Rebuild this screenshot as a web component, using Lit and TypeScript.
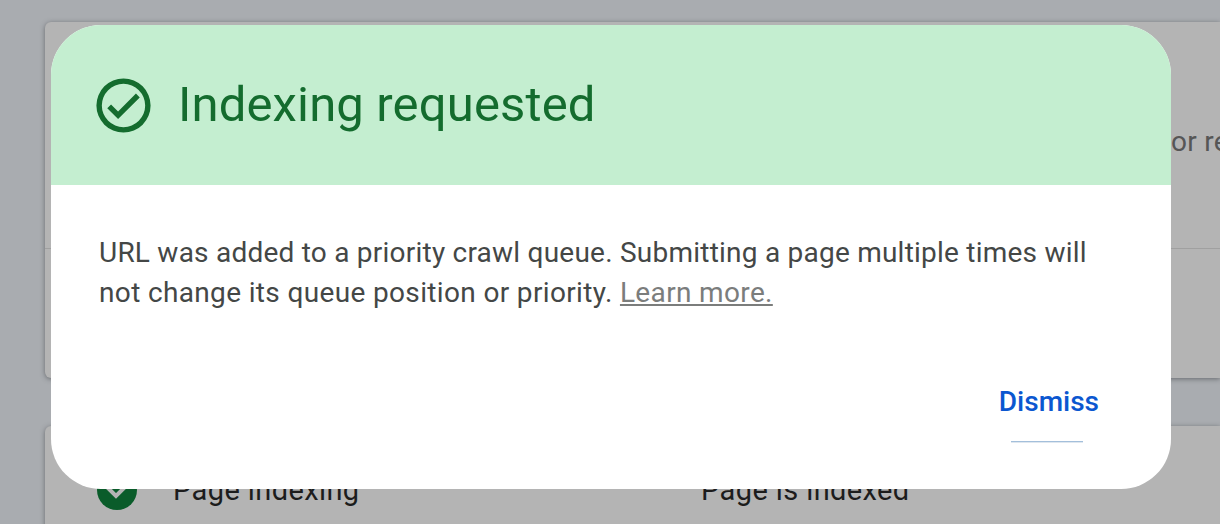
import { LitElement, html, css } from "lit";
import { customElement } from "lit/decorators.js";

@customElement("app-root")
export class AppRoot extends LitElement {
  static styles = css`
    :host {
      display: block;
      position: relative;
      width: 1220px;
      height: 524px;
      overflow: hidden;
      background: #a9acb0;
      font-family: Roboto, "Noto Sans", sans-serif;
    }
    .page {
      display: flex;
      flex-direction: column;
      gap: 48px;
      padding: 22px 0 0 45px;
    }
    .card {
      background: #b4b4b4;
      border-radius: 6px 0 0 6px;
      box-shadow: 0 1px 5px rgba(60, 64, 67, 0.6);
    }
    .top {
      height: 356px;
      display: flex;
      flex-direction: column;
    }
    .top-head {
      height: 227px;
      box-sizing: border-box;
      border-bottom: 1px solid #a0a0a0;
      padding-top: 103px;
      padding-left: 1126px;
      white-space: nowrap;
      font-size: 28px;
      line-height: 34px;
      letter-spacing: 0.3px;
      color: #565656;
    }
    .bottom {
      height: 200px;
      border-radius: 6px 0 0 0;
    }
    .row {
      display: flex;
      align-items: center;
      padding: 42px 0 0 52px;
      font-size: 29px;
      line-height: 44px;
      letter-spacing: 0.4px;
      color: #1c1c1c;
      white-space: nowrap;
    }
    .status {
      width: 40px;
      height: 40px;
      flex: none;
    }
    .row-label {
      margin-left: 36px;
      width: 528px;
    }
    .dialog {
      position: absolute;
      left: 51px;
      top: 25px;
      width: 1120px;
      height: 464px;
      border-radius: 50px;
      overflow: hidden;
      background: #fff;
      display: flex;
      flex-direction: column;
    }
    .head {
      height: 160px;
      flex: none;
      background: #c4eed0;
      display: flex;
      align-items: center;
      padding-left: 40px;
      gap: 22px;
      color: #146c2e;
    }
    .check {
      width: 65px;
      height: 65px;
      flex: none;
      display: block;
    }
    h1 {
      margin: 0;
      font-size: 49px;
      font-weight: 400;
      line-height: 56px;
      letter-spacing: 0.15px;
    }
    .body {
      margin: 0;
      padding: 48px 72px 0 48px;
      font-size: 28px;
      line-height: 40px;
      letter-spacing: 0.23px;
      color: #444746;
    }
    .line-two {
      letter-spacing: 0.35px;
    }
    .body a {
      color: #7b7d7c;
      text-decoration: underline;
    }
    .actions {
      display: flex;
      flex-direction: column;
      align-items: flex-end;
      padding: 69px 72px 0 0;
    }
    .dismiss {
      font-size: 28px;
      font-weight: 500;
      line-height: 40px;
      color: #0b57d0;
    }
    .ripple {
      width: 72px;
      height: 2px;
      margin: 19px 16px 0 0;
      background: linear-gradient(#a3bfdb 50%, #dfe7ef 50%);
    }
  `;

  render() {
    return html`
      <div class="page">
        <section class="card top">
          <div class="top-head">or request indexing</div>
        </section>
        <section class="card bottom">
          <div class="row">
            <svg class="status" viewBox="0 0 40 40">
              <circle cx="20" cy="20" r="20" fill="#0a5c2a"></circle>
              <path d="M10 17l9 9 12-12" fill="none" stroke="#b4b4b4" stroke-width="4"></path>
            </svg>
            <span class="row-label">Page indexing</span>
            <span>Page is indexed</span>
          </div>
        </section>
      </div>
      <div class="dialog" role="dialog">
        <header class="head">
          <svg class="check" viewBox="0 0 24 24" fill="currentColor">
            <path d="M12 2a10 10 0 1 0 0 20 10 10 0 0 0 0-20zm0 18a8 8 0 1 1 0-16 8 8 0 0 1 0 16z"></path>
            <path d="M16.6 7.6 10 14.2l-2.6-2.6L6 13l4 4 8-8z"></path>
          </svg>
          <h1>Indexing requested</h1>
        </header>
        <p class="body">
          URL was added to a priority crawl queue. Submitting a page multiple times will
          <span class="line-two">not change its queue position or priority. <a href="#">Learn more.</a></span>
        </p>
        <div class="actions">
          <span class="dismiss">Dismiss</span>
          <div class="ripple"></div>
        </div>
      </div>
    `;
  }
}
